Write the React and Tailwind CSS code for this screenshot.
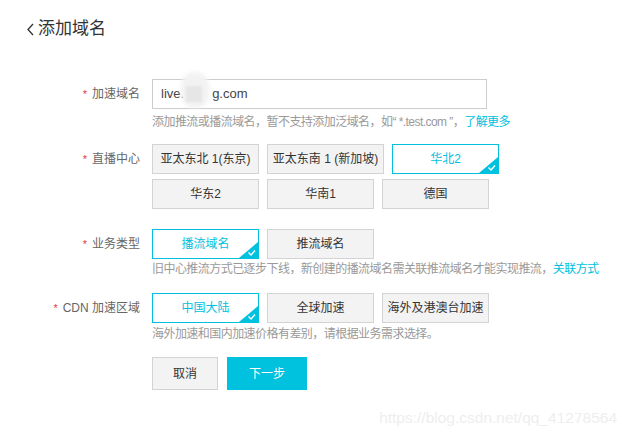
import React from "react";

const ACCENT = "#00c1de";

function Check() {
  return (
    <svg className="absolute right-0 bottom-0" width="19" height="16" viewBox="0 0 19 16">
      <polygon points="19,0 19,16 0,16" fill={ACCENT} />
      <polyline points="9.5,10.5 12,13 16,8.5" fill="none" stroke="#fff" strokeWidth="1.4" />
    </svg>
  );
}

function Opt({ label, selected, w = "w-[107px]" }) {
  return (
    <div
      className={`relative ${w} h-[30px] flex items-center justify-center text-[12px] border ${
        selected ? "bg-white border-[#00c1de] text-[#00c1de]" : "bg-[#f3f3f3] border-[#d3d3d3] text-[#333]"
      }`}
    >
      {label}
      {selected && <Check />}
    </div>
  );
}

function Label({ children }) {
  return (
    <div className="w-[152px] shrink-0 pr-3 h-[30px] flex items-center justify-end text-[12px] text-[#666]">
      <span className="text-[#e4393c] mr-[5px] text-[11px]">*</span>
      {children}
    </div>
  );
}

function Hint({ children, cls = "" }) {
  return <div className={`text-[12px] leading-[16px] tracking-[-0.55px] text-[#999] whitespace-nowrap ${cls}`}>{children}</div>;
}

export default function App() {
  return (
    <div
      className="relative w-[627px] h-[439px] bg-white overflow-hidden"
      style={{ fontFamily: '"Liberation Sans", "Noto Sans CJK SC", sans-serif' }}
    >
      <div className="flex items-center pl-[26px] pt-[18px] text-[17px] leading-[22px] text-[#333]">
        <svg width="9" height="13" viewBox="0 0 9 13" className="mr-[3px]">
          <polyline points="7,1 2,6.5 7,12" fill="none" stroke="#333" strokeWidth="1.3" />
        </svg>
        添加域名
      </div>

      <div className="flex mt-[39px]">
        <Label>加速域名</Label>
        <div className="flex flex-col">
          <div className="relative w-[335px] h-[30px] border border-[#cccccc] flex items-center pl-[8px] text-[13px] text-[#444]">
            live.<span className="inline-block w-[28px]" />g.com
            <div className="absolute left-[28px] top-[-8px] w-[28px] h-[36px] rounded-full bg-[#f2f2f2] blur-[2px]" />
            <div className="absolute left-[33px] top-[6px] w-[16px] h-[16px] bg-[#e6e6e6] blur-[1px]" />
          </div>
          <Hint cls="mt-[5px]">
            添加推流或播流域名，暂不支持添加泛域名，如“ *.test.com ”，<span className="text-[#00c1de]">了解更多</span>
          </Hint>
        </div>
      </div>

      <div className="flex mt-[14px]">
        <Label>直播中心</Label>
        <div className="flex flex-col gap-[5px]">
          <div className="flex gap-[8px]">
            <Opt label="亚太东北 1(东京)" />
            <Opt label="亚太东南 1 (新加坡)" w="w-[117px]" />
            <Opt label="华北2" selected />
          </div>
          <div className="flex gap-[8px]">
            <Opt label="华东2" />
            <Opt label="华南1" />
            <Opt label="德国" />
          </div>
        </div>
      </div>

      <div className="flex mt-[20px]">
        <Label>业务类型</Label>
        <div className="flex flex-col">
          <div className="flex gap-[8px]">
            <Opt label="播流域名" selected />
            <Opt label="推流域名" />
          </div>
          <Hint cls="mt-[2px]">
            旧中心推流方式已逐步下线，新创建的播流域名需关联推流域名才能实现推流，<span className="text-[#00c1de]">关联方式</span>
          </Hint>
        </div>
      </div>

      <div className="flex mt-[16px]">
        <Label>CDN 加速区域</Label>
        <div className="flex flex-col">
          <div className="flex gap-[8px]">
            <Opt label="中国大陆" selected />
            <Opt label="全球加速" />
            <Opt label="海外及港澳台加速" />
          </div>
          <Hint cls="mt-[3px]">海外加速和国内加速价格有差别，请根据业务需求选择。</Hint>
        </div>
      </div>

      <div className="flex gap-[9px] pl-[152px] mt-[15px]">
        <div className="w-[66px] h-[33px] flex items-center justify-center border border-[#d3d3d3] bg-[#f3f3f3] text-[12px] text-[#333]">
          取消
        </div>
        <div className="w-[80px] h-[33px] flex items-center justify-center bg-[#00c1de] text-[12px] text-white">
          下一步
        </div>
      </div>

      <div className="absolute right-[10px] bottom-[10px] text-[15.5px] text-[#eeeeee]">
        https://blog.csdn.net/qq_41278564
      </div>
    </div>
  );
}
